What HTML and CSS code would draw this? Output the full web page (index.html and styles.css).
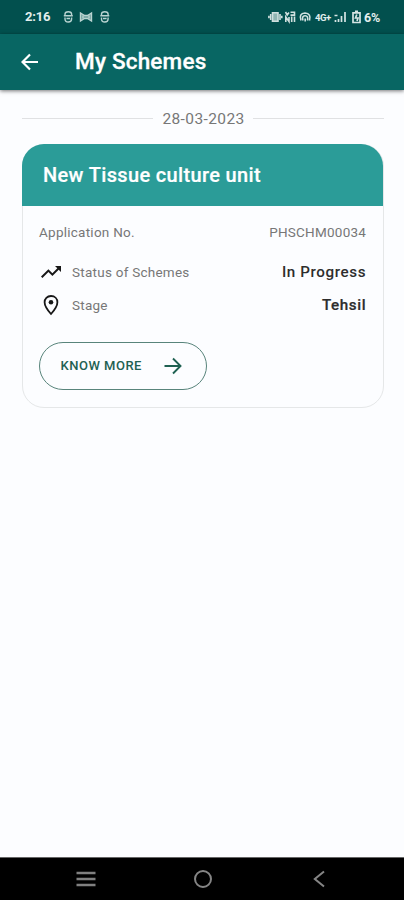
FILE: index.html
```
<!DOCTYPE html>
<html lang="en">
<head>
<meta charset="utf-8">
<title>My Schemes</title>
<link rel="stylesheet" href="styles.css">
</head>
<body>
<div class="screen">
  <div class="status-bar">
    <span class="clock">2:16</span>
    <svg class="notifications" width="48" height="14" viewBox="0 0 48 14" fill="none" stroke="#b9d3d1" stroke-width="1.400">
      <path d="M2 5.500V4Q2 1.800 5.300 1.800T8.600 4V5.500M.8 5.800h9M2 7.500v1.500Q2 12 5.300 12T8.600 9V7.500M3.500 8.500h3.600"/>
      <path d="M17.500 3v8l4-2.500h3l4 2.500V3l-4 2.500h-3z" fill="#6da09d"/><path d="M20 5.500v3M26 5.500v3"/>
      <path d="M38.500 5.500V4Q38.500 1.800 41.800 1.800T45.100 4V5.500M37.300 5.800h9M38.500 7.500v1.500Q38.500 12 41.800 12T45.100 9V7.500M40 8.500h3.600"/>
    </svg>
    <div class="system">
      <svg width="46" height="14" viewBox="0 0 46 14" fill="none" stroke="#d0e0df" stroke-width="1.600">
        <path d="M4.500 2.800h5.500v8.400H4.500z" fill="#8fb5b2"/><path d="M2.700 4v6M12 4v6M.9 5.800v2.400M13.800 5.800v2.400"/>
        <path d="M17.500 2l1.700 3L21 2.500M22.500 2.300h4v2.800h-4M17.800 12V7l3.200 4.500V7M23.700 12V6.500M26.500 12V6.500"/>
        <path d="M33 10.500Q30.500 3.500 37 3Q43.500 3.500 41.500 10.500M35 10.500Q33.500 6 37 5.800T39.500 10.500M37.200 8.500v3"/>
      </svg>
      <span class="network">4G+</span>
      <svg width="30" height="14" viewBox="0 0 30 14" fill="none" stroke="#d6e5e4" stroke-width="1.700">
        <path d="M1.500 12v-2M4.500 12V9M7.500 12V6M11 12V2M.5 5.500h3"/>
        <path d="M19 2.800h7v9.700h-7zM21 1.300h3"/><path d="M22.800 4.500L21.500 8h2.500l-1 3"/>
      </svg>
      <span class="battery">6%</span>
    </div>
  </div>
  <header class="app-bar">
    <svg class="back" width="18" height="18" viewBox="0 0 18 18" fill="none" stroke="#fff" stroke-width="2.200"><path d="M17 9H2M9 1.500L1.500 9 9 16.500"/></svg>
    <h1>My Schemes</h1>
  </header>
  <main>
    <div class="date-row"><span class="date">28-03-2023</span></div>
    <article class="card">
      <h2>New Tissue culture unit</h2>
      <div class="details">
        <div class="row application"><span class="label">Application No.</span><span class="number">PHSCHM00034</span></div>
        <div class="row">
          <svg class="icon" width="24" height="24" viewBox="0 0 24 24"><path fill="#171717" d="M16 6l2.290 2.290-4.880 4.880-4-4L2 16.590 3.410 18l6-6 4 4 6.300-6.290L22 12V6z"/></svg>
          <span class="label">Status of Schemes</span><strong class="value">In Progress</strong>
        </div>
        <div class="row stage-row">
          <svg class="icon" width="24" height="24" viewBox="0 0 24 24"><path fill="none" stroke="#171717" stroke-width="1.800" d="M12 3C8.100 3 5.600 5.800 5.600 9.200c0 4.200 4.200 9.300 6.400 11.800 2.200-2.500 6.400-7.600 6.400-11.800C18.400 5.800 15.900 3 12 3z"/><circle cx="12" cy="9.300" r="2.300" fill="#171717"/></svg>
          <span class="label">Stage</span><strong class="value tehsil">Tehsil</strong>
        </div>
        <button class="more"><span>KNOW MORE</span><svg width="18" height="18" viewBox="0 0 18 18" fill="none" stroke="#1f6152" stroke-width="1.900"><path d="M.5 9H16M9 1.500L16.500 9 9 16.500"/></svg></button>
      </div>
    </article>
  </main>
  <nav class="nav-bar">
    <svg width="20" height="18" viewBox="0 0 20 18" stroke="#808080" stroke-width="2.400"><path d="M.5 3h19M.5 9h19M.5 15h19"/></svg>
    <svg class="home" width="20" height="20" viewBox="0 0 20 20" fill="none" stroke="#858585" stroke-width="2"><circle cx="10" cy="10" r="8"/></svg>
    <svg width="12" height="18" viewBox="0 0 12 18" fill="none" stroke="#858585" stroke-width="2"><path d="M11 1.500L1.800 9 11 16.500"/></svg>
  </nav>
</div>
</body>
</html>
```
FILE: styles.css
```
* { box-sizing: border-box; }
body { margin: 0; font-family: Roboto, "Liberation Sans", sans-serif; }
h1, h2 { margin: 0; font-weight: 500; }
svg { display: block; flex: none; }
.screen { width: 404px; height: 900px; display: flex; flex-direction: column; background: #fcfdff; overflow: hidden; white-space: nowrap; }
.status-bar { height: 34px; flex: none; background: #02504e; display: flex; align-items: center; padding: 0 24px 0 25px; color: #e3eeed; }
.clock { font-size: 13px; font-weight: 700; line-height: 16px; width: 38px; letter-spacing: -.2px; }
.system { margin-left: auto; display: flex; align-items: center; }
.network { font-size: 9.500px; font-weight: 700; width: 19px; margin-left: 1px; letter-spacing: -.4px; }
.battery { font-size: 12.500px; font-weight: 700; letter-spacing: -.2px; }
.app-bar { height: 56px; flex: none; background: #086663; display: flex; align-items: center; padding-left: 21px; box-shadow: 0 1px 4px rgba(0,0,0,.55); color: #fff; }
.back { margin-right: 36px; }
h1 { font-size: 22.500px; line-height: 28px; letter-spacing: .2px; padding-bottom: 2px; -webkit-text-stroke: .3px #fff; }
main { flex: 1; padding: 18px 20px 0 22px; }
.date-row { height: 20px; display: flex; align-items: center; color: #777; font-size: 15.500px; letter-spacing: .4px; }
.date-row::before, .date-row::after { content: ""; flex: 1; height: 1px; background: #e0e1e3; }
.date { margin: 1px 8px 0 9px; }
.card { width: 362px; height: 264px; margin-top: 16px; border: 1px solid #e5e7e8; border-radius: 22px; }
h2 { height: 62px; background: #2b9c98; color: #fff; font-size: 20px; line-height: 62px; padding-left: 21px; margin: -1px 0 0 -1px; border-radius: 22px 22px 0 0; letter-spacing: .35px; -webkit-text-stroke: .2px #fff; }
.details { padding: 16px 17px 0 16px; }
.row { height: 20px; display: flex; align-items: center; justify-content: space-between; color: #777; font-size: 13.500px; }
.application { margin-bottom: 20px; }
.icon { margin-right: 9px; }
.label { margin-right: auto; letter-spacing: .25px; }
.number { letter-spacing: .25px; margin-right: -.2px; }
.value { color: #2d2d2d; font-size: 15.200px; font-weight: 500; letter-spacing: .6px; margin-right: -.2px; }
.tehsil { -webkit-text-stroke: .2px #2d2d2d; }
.stage-row { margin-top: 13px; }
.more { width: 168px; height: 48px; margin: 27px 0 0 -.500px; border: 1px solid #58847b; border-radius: 24px; background: transparent; display: flex; align-items: center; padding: 0 24px 0 21px; justify-content: space-between; font: 500 13px Roboto, sans-serif; letter-spacing: .5px; color: #1f6152; }
.more span { padding-bottom: 2px; }
.nav-bar { height: 43px; flex: none; border-top: 1px solid #666; background: #000; display: flex; align-items: center; justify-content: space-between; padding: 0 79px 0 76px; }
.home { margin: 0 2px 0 -2px; }
```
